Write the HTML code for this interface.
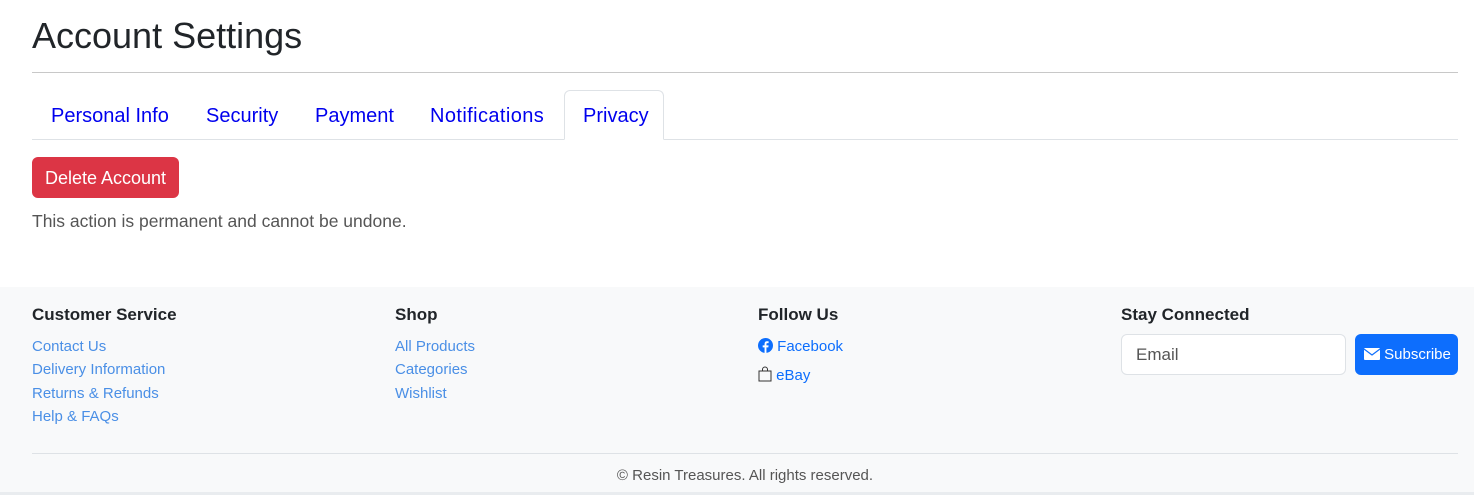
<!DOCTYPE html>
<html><head><meta charset="utf-8"><style>
*{box-sizing:border-box;margin:0;padding:0}
body{width:1474px;height:498px;background:#fff;font-family:"Liberation Sans",sans-serif;color:#212529;overflow:hidden;position:relative}
.abs{position:absolute;white-space:nowrap}
h1{position:absolute;left:32px;top:15px;font-size:36px;font-weight:500;line-height:42px}
.hr1{position:absolute;left:32px;width:1426px;top:72px;border-top:1px solid #c8c8c8}
.tabline{position:absolute;left:32px;width:1426px;top:139px;border-top:1px solid #dee2e6}
.tab{position:absolute;top:91px;height:50px;line-height:50px;font-size:20px;color:#0000ee;padding:0 18px}
.tab.act{top:90px;border:1px solid #dee2e6;border-bottom:1px solid #fff;border-radius:6px 6px 0 0;background:#fff}
.btn{position:absolute;left:32px;top:157px;width:147px;height:41px;background:#dc3545;color:#fff;border-radius:6px;font-size:18px;line-height:43px;text-align:center}
footer{position:absolute;left:0;top:287px;width:1474px;height:208px;background:#f8f9fa;border-bottom:3px solid #e9ecef}
.h5{position:absolute;top:18px;font-size:17px;font-weight:bold}
.lnk{position:absolute;font-size:15px;color:#4a8fe6}
.inp{position:absolute;left:1121px;top:47px;width:225px;height:41px;border:1px solid #dee2e6;border-radius:6px;background:#fff;font-size:17px;color:#555;padding-left:14px;line-height:39px}
.sub{position:absolute;left:1355px;top:47px;width:103px;height:41px;background:#0d6efd;border-radius:6px;color:#fff;font-size:15px;line-height:41px;padding-left:9px}
.fhr{position:absolute;left:32px;width:1426px;top:166px;border-top:1px solid #dee2e6}
.copy{position:absolute;left:0;width:1490px;text-align:center;top:180px;font-size:15px;color:#555}
</style></head><body>
<h1>Account Settings</h1>
<div class="hr1"></div>
<div class="tabline"></div>
<div class="tab" style="left:33px">Personal Info</div>
<div class="tab" style="left:188px">Security</div>
<div class="tab" style="left:297px">Payment</div>
<div class="tab" style="left:412px;letter-spacing:0.4px">Notifications</div>
<div class="tab act" style="left:564px;width:100px;padding:0 0 0 18px">Privacy</div>
<div class="btn">Delete Account</div>
<div class="abs" style="left:32px;top:211px;font-size:17.5px;color:#555">This action is permanent and cannot be undone.</div>
<footer>
<div class="h5" style="left:32px">Customer Service</div>
<div class="lnk" style="left:32px;top:51px">Contact Us</div>
<div class="lnk" style="left:32px;top:74px">Delivery Information</div>
<div class="lnk" style="left:32px;top:98px">Returns &amp; Refunds</div>
<div class="lnk" style="left:32px;top:121px">Help &amp; FAQs</div>
<div class="h5" style="left:395px">Shop</div>
<div class="lnk" style="left:395px;top:51px">All Products</div>
<div class="lnk" style="left:395px;top:74px">Categories</div>
<div class="lnk" style="left:395px;top:98px">Wishlist</div>
<div class="h5" style="left:758px">Follow Us</div>
<div class="lnk" style="left:758px;top:51px;color:#0d6efd"><svg width="15" height="15" viewBox="0 0 16 16" style="vertical-align:-2px"><circle cx="8" cy="8" r="8" fill="#0d6efd"/><path d="M9 16V10h2l.3-2.2H9V6.5c0-.6.2-1 1.1-1h1.2V3.5c-.2 0-1-.1-1.8-.1C8 3.4 7 4.4 7 6.2v1.6H5V10h2v6z" fill="#fff"/></svg> Facebook</div>
<div class="lnk" style="left:758px;top:79px;color:#0d6efd"><svg width="14" height="16" viewBox="0 0 14 16" style="vertical-align:-2px"><rect x="1" y="5" width="12" height="10" fill="none" stroke="#333" stroke-width="1"/><path d="M4.5 5V3.5a2.5 2.5 0 0 1 5 0V5" fill="none" stroke="#333"/></svg> eBay</div>
<div class="h5" style="left:1121px">Stay Connected</div>
<div class="inp">Email</div>
<div class="sub"><svg width="16" height="12" viewBox="0 0 16 12" style="vertical-align:-1px"><rect width="16" height="12" rx="1" fill="#fff"/><path d="M0 1l8 6 8-6" fill="none" stroke="#0d6efd" stroke-width="1.2"/></svg> Subscribe</div>
<div class="fhr"></div>
<div class="copy">© Resin Treasures. All rights reserved.</div>
</footer>
</body></html>
